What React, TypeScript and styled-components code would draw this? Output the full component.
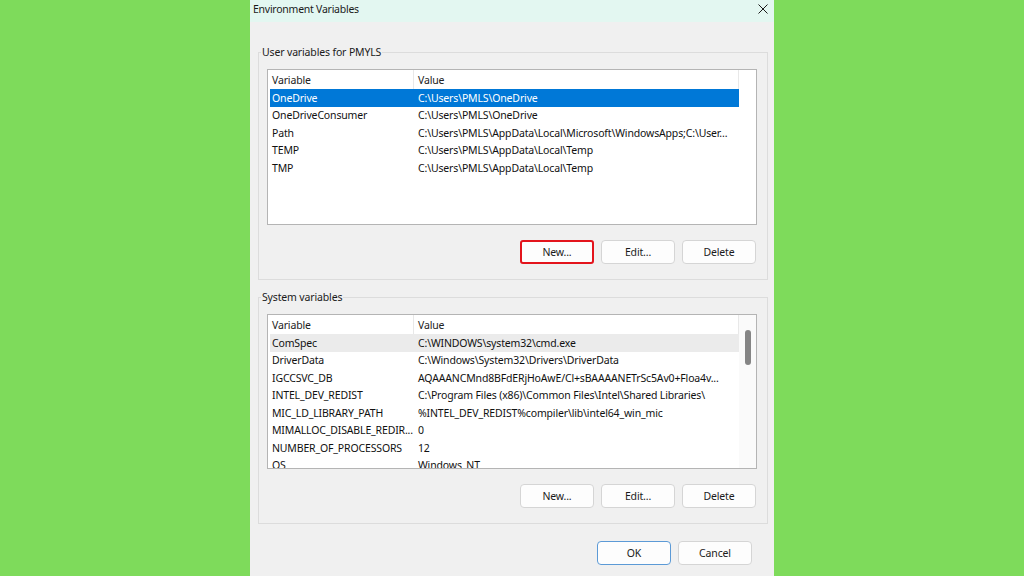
import React from 'react';
import styled, { createGlobalStyle } from 'styled-components';

const Global = createGlobalStyle`
  html, body { margin: 0; padding: 0; width: 1024px; height: 576px; overflow: hidden; }
  body { background: #7edb5b; font-family: "Noto Sans", "Open Sans", sans-serif; }
`;

const Page = styled.div`
  width: 1024px;
  height: 576px;
  display: flex;
  justify-content: center;
  background: #7edb5b;
`;

const Dialog = styled.div`
  width: 524px;
  height: 576px;
  background: #f0f0f0;
  display: flex;
  flex-direction: column;
  overflow: hidden;
  color: #1b1b1b;
  font-size: 10.5px;
  letter-spacing: -0.15px;
`;

const TitleBar = styled.div`
  height: 22px;
  flex: none;
  box-sizing: border-box;
  background: #e3f7f1;
  display: flex;
  align-items: center;
  justify-content: space-between;
  padding: 0 6px 4px 3px;
`;

const Title = styled.span`
  line-height: 14px;
  letter-spacing: -0.25px;
`;

const Content = styled.div`
  display: flex;
  flex-direction: column;
  padding: 30px 6px 0 8px;
`;

const Group = styled.div<{ $mt: number }>`
  position: relative;
  margin-top: ${(p) => p.$mt}px;
  border: 1px solid #dcdcdc;
  padding: 16px 10px 15px 8px;
  display: flex;
  flex-direction: column;
`;

const Legend = styled.span`
  position: absolute;
  top: -8px;
  left: 2px;
  padding: 0 1px;
  background: #f0f0f0;
  line-height: 15px;
`;

const List = styled.div<{ $h: number }>`
  height: ${(p) => p.$h}px;
  box-sizing: border-box;
  border: 1px solid #b4b4b4;
  background: #fff;
  display: flex;
  overflow: hidden;
`;

const ListBody = styled.div`
  width: 469px;
  flex: none;
  margin-left: 2px;
  display: flex;
  flex-direction: column;
`;

const HeaderRow = styled.div`
  height: 19px;
  flex: none;
  display: flex;
  align-items: center;
  color: #222;
`;

const Row = styled.div<{ $state?: 'selected' | 'hover' }>`
  height: 17.5px;
  flex: none;
  display: flex;
  align-items: center;
  white-space: nowrap;
  background: ${(p) =>
    p.$state === 'selected' ? '#0078d7' : p.$state === 'hover' ? '#ebebeb' : 'transparent'};
  color: ${(p) => (p.$state === 'selected' ? '#ffffff' : '#111')};
`;

const NameCell = styled.div<{ $head?: boolean }>`
  width: 144px;
  flex: none;
  box-sizing: border-box;
  padding-left: 2px;
  overflow: hidden;
  align-self: stretch;
  display: flex;
  align-items: center;
  border-right: ${(p) => (p.$head ? '1px solid #e8e8e8' : 'none')};
`;

const ValueCell = styled.div<{ $head?: boolean }>`
  flex: 1;
  box-sizing: border-box;
  padding-left: 4px;
  overflow: hidden;
  align-self: stretch;
  display: flex;
  align-items: center;
  border-right: ${(p) => (p.$head ? '1px solid #e8e8e8' : 'none')};
`;

const ScrollTrack = styled.div`
  flex: 1;
  display: flex;
  justify-content: center;
  padding-top: 15px;
  background: #fafafa;
`;

const ScrollThumb = styled.div`
  width: 6px;
  height: 35px;
  border-radius: 3px;
  background: #858585;
`;

const ButtonRow = styled.div<{ $mt: number; $pr: number }>`
  display: flex;
  justify-content: flex-end;
  gap: 7px;
  margin-top: ${(p) => p.$mt}px;
  padding-right: ${(p) => p.$pr}px;
`;

const Button = styled.button<{ $variant?: 'default' | 'marked' }>`
  width: 74px;
  height: 24px;
  box-sizing: border-box;
  background: #fdfdfd;
  border: ${(p) =>
    p.$variant === 'marked'
      ? '2px solid #e3141c'
      : p.$variant === 'default'
      ? '1px solid #5c9ad6'
      : '1px solid #d5d5d5'};
  border-radius: ${(p) => (p.$variant === 'marked' ? '3px' : '4px')};
  font-family: inherit;
  font-size: 10.5px;
  letter-spacing: -0.15px;
  color: #1b1b1b;
  padding: 0;
  display: flex;
  align-items: center;
  justify-content: center;
`;

const Footer = styled.div`
  display: flex;
  justify-content: flex-end;
  gap: 7px;
  margin-top: 17px;
  padding-right: 16px;
`;

type Var = [string, string];

const userVars: Var[] = [
  ['OneDrive', 'C:\\Users\\PMLS\\OneDrive'],
  ['OneDriveConsumer', 'C:\\Users\\PMLS\\OneDrive'],
  ['Path', 'C:\\Users\\PMLS\\AppData\\Local\\Microsoft\\WindowsApps;C:\\User...'],
  ['TEMP', 'C:\\Users\\PMLS\\AppData\\Local\\Temp'],
  ['TMP', 'C:\\Users\\PMLS\\AppData\\Local\\Temp'],
];

const systemVars: Var[] = [
  ['ComSpec', 'C:\\WINDOWS\\system32\\cmd.exe'],
  ['DriverData', 'C:\\Windows\\System32\\Drivers\\DriverData'],
  ['IGCCSVC_DB', 'AQAAANCMnd8BFdERjHoAwE/Cl+sBAAAANETrSc5Av0+Floa4v...'],
  ['INTEL_DEV_REDIST', 'C:\\Program Files (x86)\\Common Files\\Intel\\Shared Libraries\\'],
  ['MIC_LD_LIBRARY_PATH', '%INTEL_DEV_REDIST%compiler\\lib\\intel64_win_mic'],
  ['MIMALLOC_DISABLE_REDIR...', '0'],
  ['NUMBER_OF_PROCESSORS', '12'],
  ['OS', 'Windows_NT'],
];

function VarList({
  rows,
  height,
  selected,
  hover,
  scroll,
}: {
  rows: Var[];
  height: number;
  selected?: number;
  hover?: number;
  scroll?: boolean;
}) {
  return (
    <List $h={height}>
      <ListBody>
        <HeaderRow>
          <NameCell $head>Variable</NameCell>
          <ValueCell $head>Value</ValueCell>
        </HeaderRow>
        {rows.map(([n, v], i) => (
          <Row key={n} $state={i === selected ? 'selected' : i === hover ? 'hover' : undefined}>
            <NameCell>{n}</NameCell>
            <ValueCell>{v}</ValueCell>
          </Row>
        ))}
      </ListBody>
      {scroll ? (
        <ScrollTrack>
          <ScrollThumb />
        </ScrollTrack>
      ) : null}
    </List>
  );
}

function CloseIcon() {
  return (
    <svg width="10" height="10" viewBox="0 0 10 10" fill="none">
      <path d="M0.5 0.5L9.5 9.5M9.5 0.5L0.5 9.5" stroke="#1b1b1b" strokeWidth="1" />
    </svg>
  );
}

export default function App() {
  return (
    <>
      <Global />
      <Page>
        <Dialog>
          <TitleBar>
            <Title>Environment Variables</Title>
            <CloseIcon />
          </TitleBar>
          <Content>
            <Group $mt={0}>
              <Legend>User variables for PMYLS</Legend>
              <VarList rows={userVars} height={156} selected={0} />
              <ButtonRow $mt={15} $pr={1}>
                <Button $variant="marked">New...</Button>
                <Button>Edit...</Button>
                <Button>Delete</Button>
              </ButtonRow>
            </Group>
            <Group $mt={17}>
              <Legend>System variables</Legend>
              <VarList rows={systemVars} height={155} hover={0} scroll />
              <ButtonRow $mt={15} $pr={1}>
                <Button>New...</Button>
                <Button>Edit...</Button>
                <Button>Delete</Button>
              </ButtonRow>
            </Group>
            <Footer>
              <Button $variant="default">OK</Button>
              <Button>Cancel</Button>
            </Footer>
          </Content>
        </Dialog>
      </Page>
    </>
  );
}
